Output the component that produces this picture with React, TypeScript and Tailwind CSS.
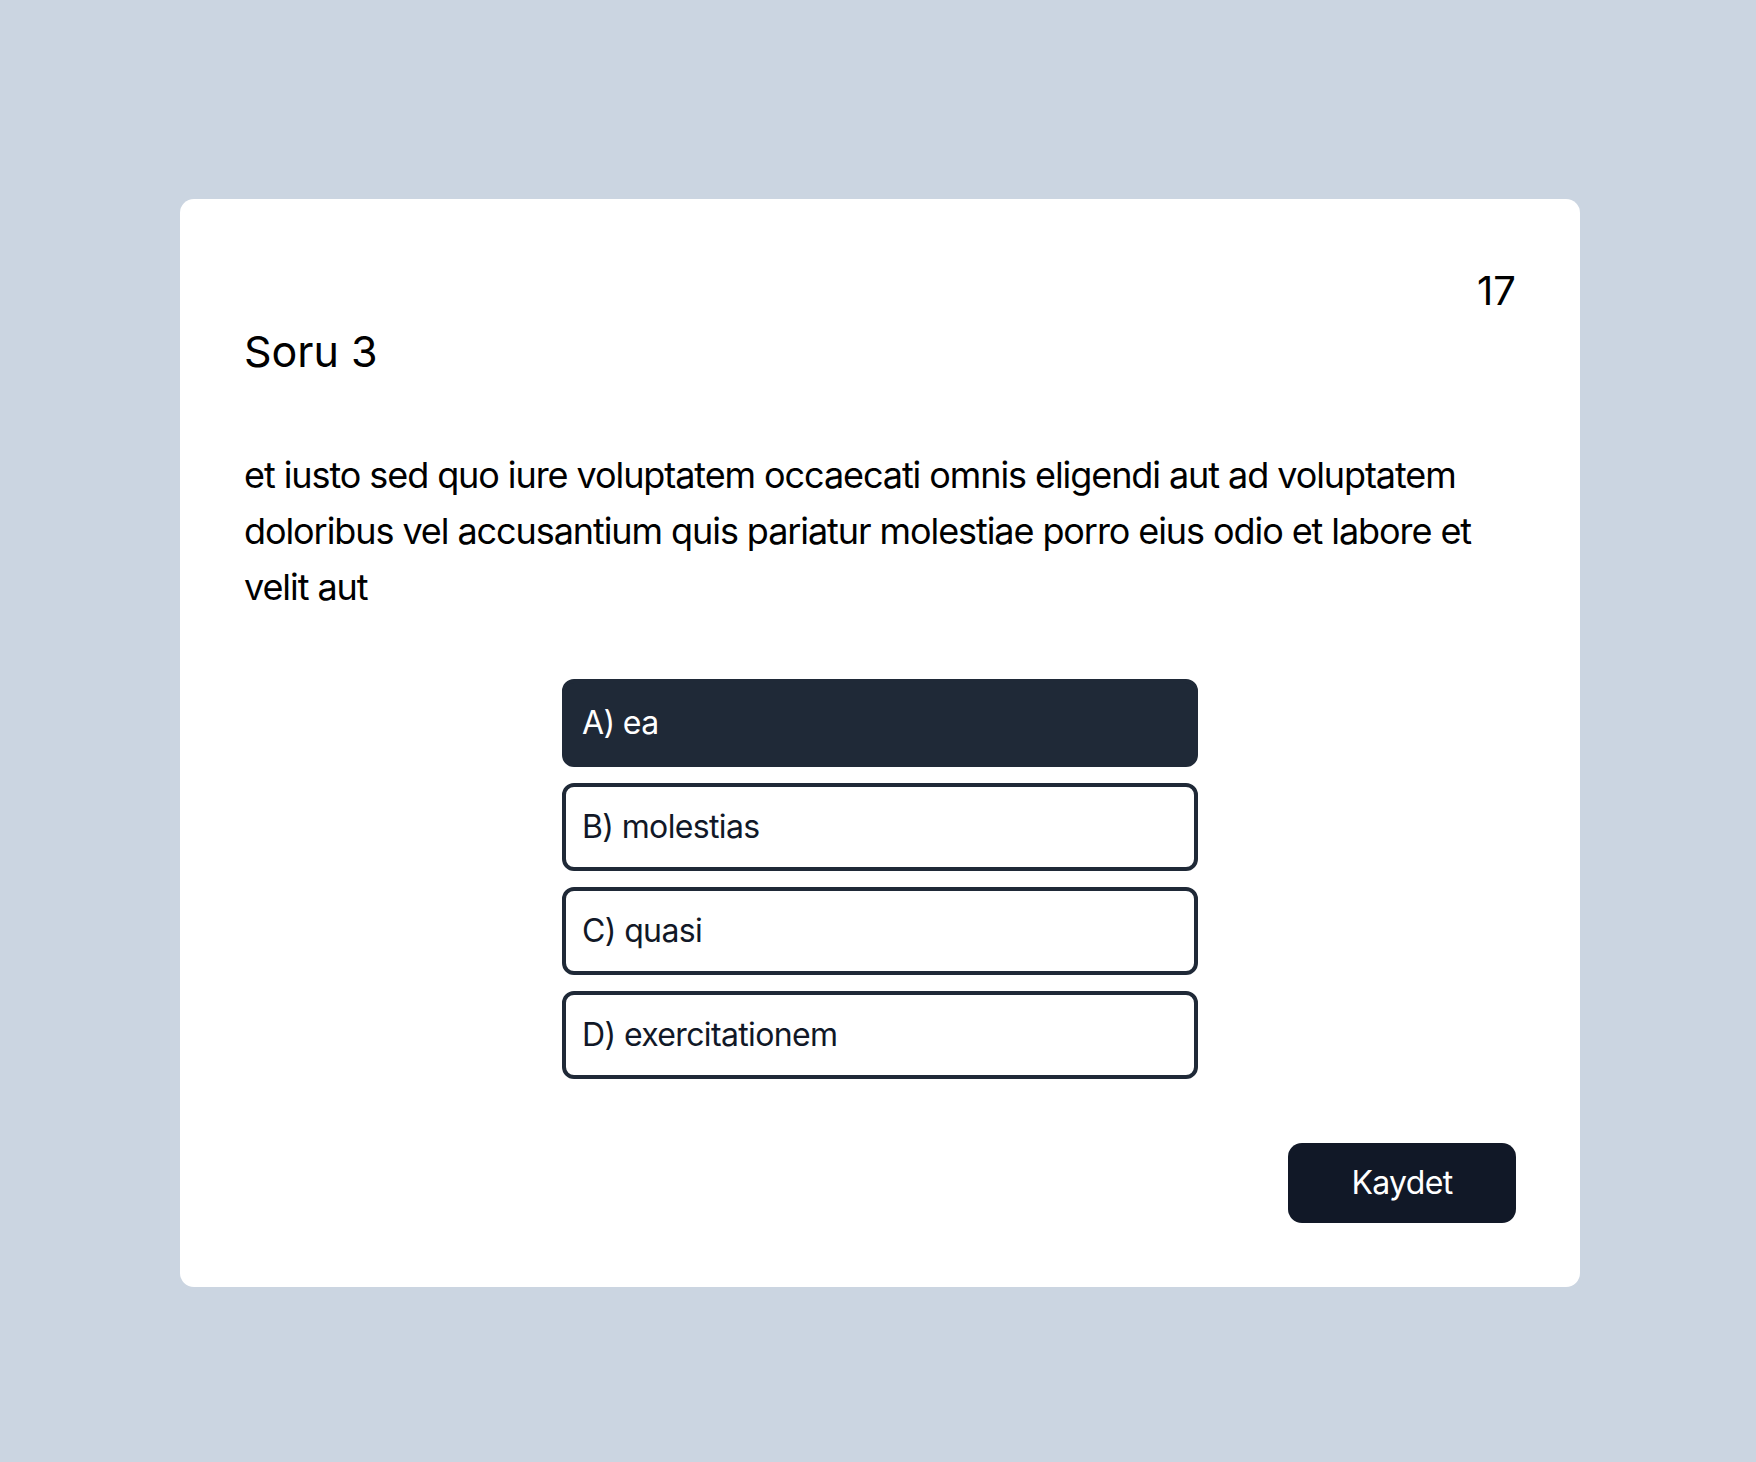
import React, { useState } from 'react';

const options = [
    { key: 'A', text: 'ea' },
    { key: 'B', text: 'molestias' },
    { key: 'C', text: 'quasi' },
    { key: 'D', text: 'exercitationem' },
];

const App: React.FC = () => {
    const [selected, setSelected] = useState('A');

    return (
        <div className="min-h-screen bg-[#cbd5e1] pt-[199px] pb-[176px] font-['Inter',sans-serif]">
            <div className="ml-[180px] w-[1400px] rounded-[14px] bg-white p-16">
                <div className="text-right text-[40px] leading-[56px] text-black">17</div>
                <h2 className="text-[43px] leading-[64px] text-black">Soru 3</h2>
                <p className="mt-16 text-[36px] leading-[56px] tracking-[-0.03em] text-black">
                    et iusto sed quo iure voluptatem occaecati omnis eligendi aut ad voluptatem doloribus vel accusantium quis pariatur molestiae porro eius odio et labore et velit aut
                </p>
                <div className="mx-auto mt-16 flex w-1/2 flex-col gap-4">
                    {options.map(o => (
                        <button
                            key={o.key}
                            onClick={() => setSelected(o.key)}
                            className={
                                selected === o.key
                                    ? 'rounded-[12px] border-4 border-[#1f2937] bg-[#1f2937] px-4 py-3 text-left text-[32px] leading-[56px] tracking-[-0.02em] text-white'
                                    : 'rounded-[12px] border-4 border-[#1f2937] bg-white px-4 py-3 text-left text-[32px] leading-[56px] tracking-[-0.02em] text-[#111827]'
                            }
                        >
                            {o.key}) {o.text}
                        </button>
                    ))}
                </div>
                <div className="mt-16 flex justify-end">
                    <button className="w-[228px] rounded-[14px] bg-[#111827] py-3 text-center text-[32px] leading-[56px] tracking-[-0.02em] text-white">
                        Kaydet
                    </button>
                </div>
            </div>
        </div>
    );
};

export default App;
